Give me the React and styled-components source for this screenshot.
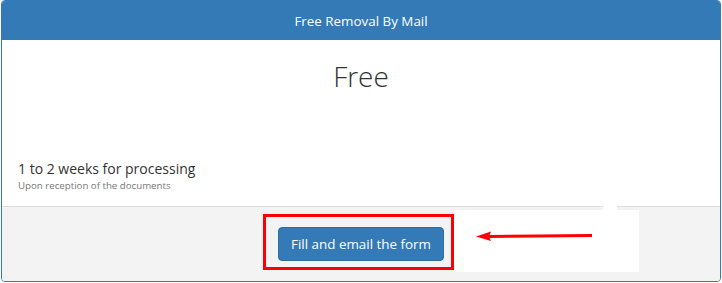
import React from 'react'
import styled, { createGlobalStyle } from 'styled-components'

const GlobalStyle = createGlobalStyle`
  body {
    margin: 0;
    background: #fff;
    font-family: "Open Sans", "Liberation Sans", sans-serif;
    color: #333;
  }
`;

const Page = styled.div`
  position: relative;
  width: 722px;
  height: 283px;
  overflow: hidden;
`;

const Panel = styled.div`
  margin: 0 1px;
  border: 1px solid #337ab7;
  border-radius: 4px;
  overflow: hidden;
  background: #fff;
`;

const Heading = styled.div`
  height: 39px;
  background: #337ab7;
  color: #fff;
  font-size: 13.4px;
  display: flex;
  align-items: center;
  justify-content: center;
`;

const Body = styled.div`
  padding: 20px 16px 13px;
`;

const Price = styled.div`
  text-align: center;
  font-size: 28px;
  font-weight: 300;
  line-height: 32px;
  margin-bottom: 67px;
`;

const Delay = styled.div`
  font-size: 14px;
  line-height: 20px;
`;

const Note = styled.div`
  font-size: 9.7px;
  line-height: 14px;
  color: #777;
`;

const Footer = styled.div`
  background: #f3f3f3;
  border-top: 1px solid #ddd;
  padding: 20px 0 20px;
  display: flex;
  justify-content: center;
`;

const Button = styled.button`
  height: 34px;
  padding: 0 12px;
  background: #337ab7;
  border: 1px solid #2e6da4;
  border-radius: 4px;
  color: #fff;
  font-family: inherit;
  font-size: 13.4px;
`;

/* annotation overlays drawn on top of the screenshot */
const Highlight = styled.div`
  position: absolute;
  left: 263px;
  top: 214px;
  width: 185px;
  height: 50px;
  border: 3px solid #ff0000;
`;

const Patch = styled.div`
  position: absolute;
  background: #fff;
  left: ${p => p.$x}px;
  top: ${p => p.$y}px;
  width: ${p => p.$w}px;
  height: ${p => p.$h}px;
`;

const Arrow = styled.svg`
  position: absolute;
  left: 474px;
  top: 229px;
`;

export default function App() {
  return (
    <Page>
      <GlobalStyle />
      <Panel>
        <Heading>Free Removal By Mail</Heading>
        <Body>
          <Price>Free</Price>
          <Delay>1 to 2 weeks for processing</Delay>
          <Note>Upon reception of the documents</Note>
        </Body>
        <Footer>
          <Button>Fill and email the form</Button>
        </Footer>
      </Panel>
      <Patch $x={454} $y={210} $w={185} $h={62} />
      <Patch $x={603} $y={205} $w={14} $h={6} />
      <Highlight />
      <Arrow width="124" height="14" viewBox="0 0 124 14">
        <path d="M14 6 L118 5 L118 8 L14 9 Z" fill="#ff0000" />
        <path d="M2 7.5 L17 2.5 L15 7.5 L17 12 Z" fill="#ff0000" />
      </Arrow>
    </Page>
  )
}
